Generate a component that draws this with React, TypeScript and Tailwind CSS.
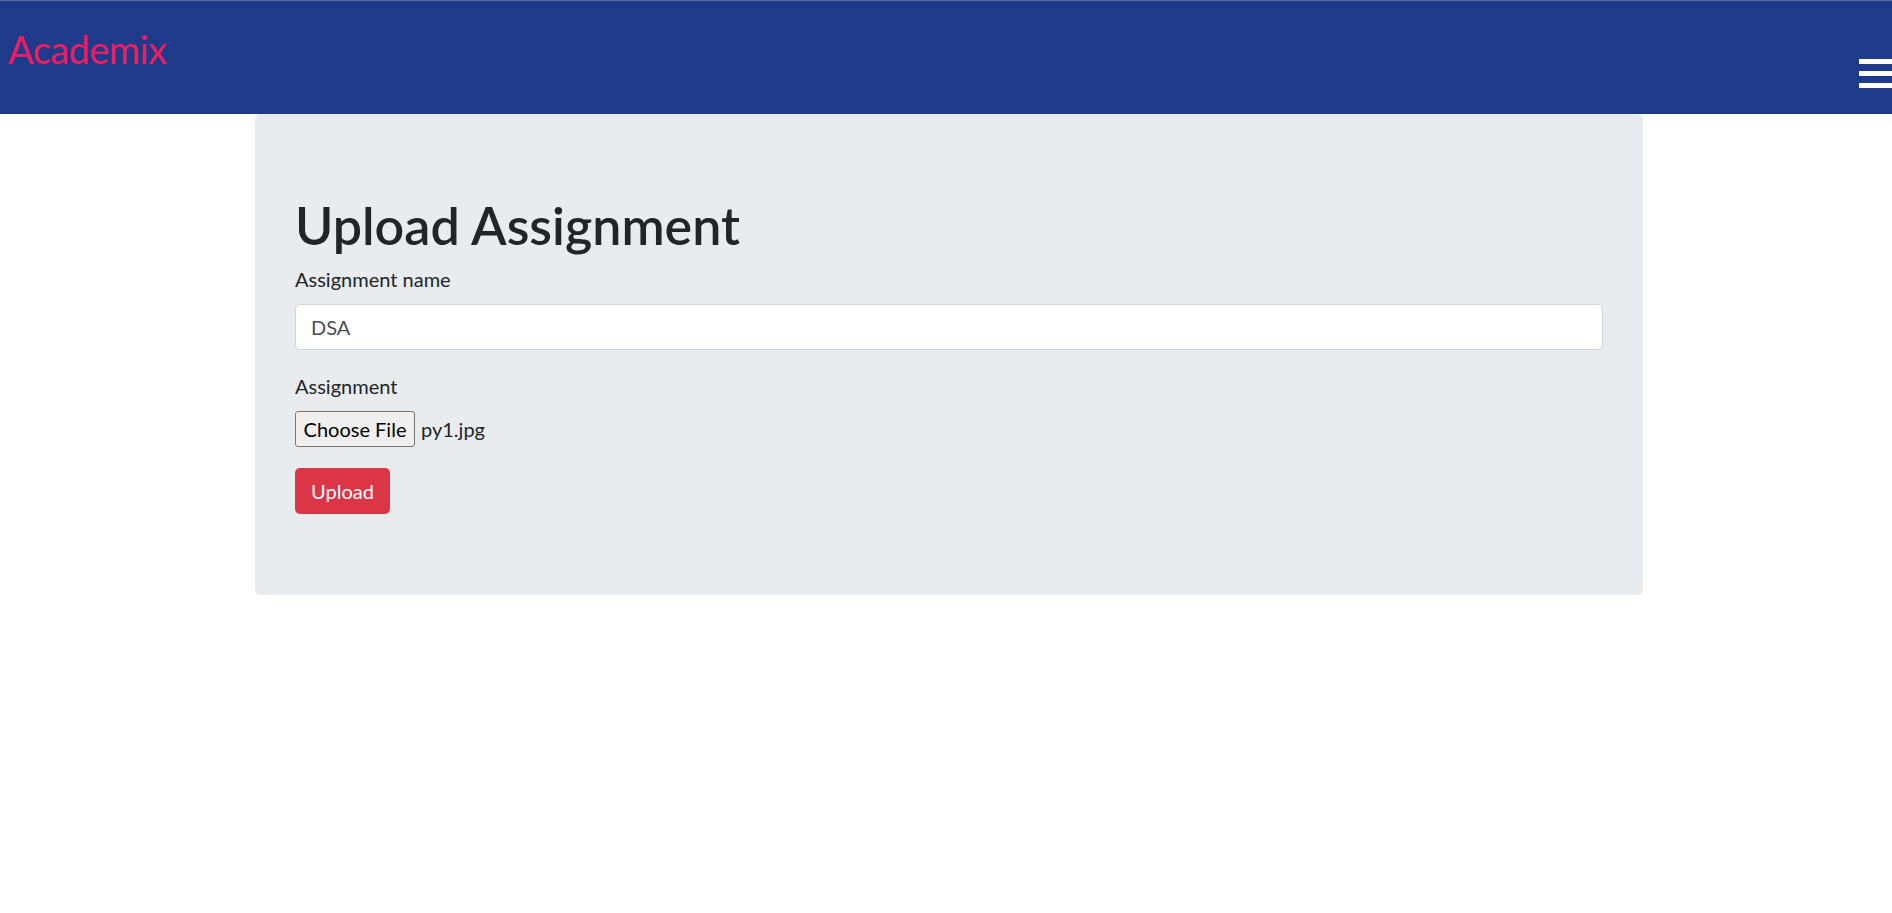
import React from 'react';

const App: React.FC = () => {
  return (
    <div className="min-h-screen bg-white font-['Lato',sans-serif] text-[#212529]">
      {/* Navbar */}
      <header className="h-[114px] bg-[#1e3a8a] border-t border-[#5a6a92] flex items-start justify-between overflow-hidden">
        <a href="#" className="ml-[8px] mt-[18px] text-[38px] leading-[60px] tracking-[-0.015em] text-[#e91e63]">
          Academix
        </a>
        <button className="mt-[58px] flex flex-col gap-[7px]" aria-label="menu">
          <span className="block w-[33px] h-[5px] bg-white"></span>
          <span className="block w-[33px] h-[5px] bg-white"></span>
          <span className="block w-[33px] h-[5px] bg-white"></span>
        </button>
      </header>

      {/* Jumbotron card */}
      <main className="ml-[255px] w-[1388px] bg-[#e9ecef] rounded-[5px] pt-[81px] pb-[81px] px-[40px]">
        <h1 className="text-[52px] leading-[60px] font-semibold mb-[9px]">Upload Assignment</h1>

        <form onSubmit={(e) => e.preventDefault()}>
          <label className="block text-[20px] leading-[30px] mb-[10px]">Assignment name</label>
          <input
            type="text"
            defaultValue="DSA"
            className="block w-full h-[46px] px-[15px] bg-white border border-[#ced4da] rounded-[5px] text-[20px] text-[#495057] outline-none"
          />

          <label className="block mt-[21px] text-[20px] leading-[30px] mb-[10px]">Assignment</label>
          <div className="flex items-center gap-[6px] h-[36px] mb-[21px]">
            <span className="h-[36px] w-[120px] flex items-center justify-center bg-[#efefef] border border-[#767676] rounded-[3px] text-[20px] text-black">
              Choose File
            </span>
            <span className="text-[20px]">py1.jpg</span>
          </div>

          <button
            type="submit"
            className="block w-[95px] h-[46px] bg-[#dc3545] text-white text-[20px] rounded-[5px]"
          >
            Upload
          </button>
        </form>
      </main>
    </div>
  );
};

export default App;
